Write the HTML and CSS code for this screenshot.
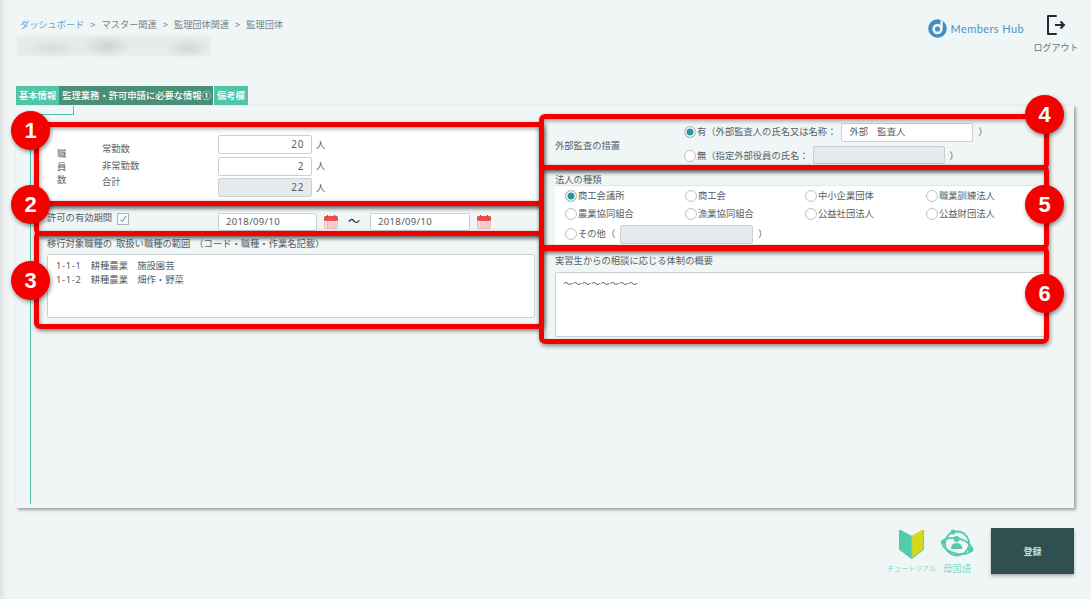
FILE: index.html
```html
<!DOCTYPE html>
<html lang="ja">
<head>
<meta charset="utf-8">
<title>監理団体</title>
<link rel="stylesheet" href="styles.css">
</head>
<body>
<svg class="defs" width="0" height="0" aria-hidden="true">
  <symbol id="cal" viewBox="0 0 16 16">
    <rect x="1" y="2" width="14" height="13" rx="2" fill="#f4b8b4"/>
    <rect x="1" y="2" width="14" height="5" rx="1.5" fill="#e8504c"/>
    <rect x="2" y="7" width="12" height="7" fill="#fbeeee"/>
    <path d="M2 9h12M2 11h12M2 13h12M4.500 7v7M7 7v7M9.500 7v7M12 7v7" stroke="#e3a5a2" stroke-width=".6"/>
    <path d="M4.500 1v3M11.500 1v3" stroke="#d8403c" stroke-width="1.2"/>
  </symbol>
</svg>
<header class="top">
  <div class="crumb-area">
    <nav class="crumbs"><span class="crumb-link">ダッシュボード</span><span class="sep">&gt;</span><span>マスター関連</span><span class="sep">&gt;</span><span>監理団体関連</span><span class="sep">&gt;</span><span>監理団体</span></nav>
    <div class="blurred"></div>
  </div>
  <div class="top-right">
    <div class="logo">
      <svg class="logo-mark" viewBox="0 0 20 20"><circle cx="10" cy="10" r="9.800" fill="#3d8fc6"/><circle cx="10" cy="10.500" r="5.500" fill="#f0f5f6"/><circle cx="10" cy="10.500" r="2.700" fill="#3d8fc6"/><path d="M13 1.500h2.500v8H13z" fill="#f0f5f6"/></svg>
      <span>Members Hub</span>
    </div>
    <div class="logout">
      <svg class="logout-icon" viewBox="0 0 21 22"><path d="M10 2H2v18h8" fill="none" stroke="#222c30" stroke-width="2" stroke-linecap="round" stroke-linejoin="round"/><path d="M9 11h9M14.500 7.500 18 11l-3.500 3.500" fill="none" stroke="#222c30" stroke-width="2"/></svg>
      <span>ログアウト</span>
    </div>
  </div>
</header>

<div class="tabs">
  <span class="tab">基本情報</span><span class="tab active">監理業務・許可申請に必要な情報①</span><span class="tab">備考欄</span>
</div>

<main class="panel">
  <div class="tree-line"></div>
  <div class="col left">
    <section class="staff">
      <div class="staff-title"><span>職</span><span>員</span><span>数</span></div>
      <div class="staff-labels"><span>常勤数</span><span>非常勤数</span><span>合計</span></div>
      <div class="staff-inputs">
        <div class="num-row"><div class="field num">20</div><span>人</span></div>
        <div class="num-row"><div class="field num">2</div><span>人</span></div>
        <div class="num-row"><div class="field num off">22</div><span>人</span></div>
      </div>
    </section>
    <section class="period">
      <span class="period-label">許可の有効期間</span>
      <span class="check"><svg viewBox="0 0 12 12"><path d="M2.500 6.500 5 9l4.500-6.500" fill="none" stroke="#2a8fb5" stroke-width="1.200"/></svg></span>
      <div class="field date">2018/09/10</div>
      <svg class="cal"><use href="#cal"/></svg>
      <span class="tilde">～</span>
      <div class="field date wide">2018/09/10</div>
      <svg class="cal"><use href="#cal"/></svg>
    </section>
    <section class="scope">
      <div class="sec-label spaced">移行対象職種の 取扱い職種の範囲 （コード・職種・作業名記載）</div>
      <div class="field area scope-area">
        <div><span class="code">1-1-1</span>　耕種農業　施設園芸</div>
        <div><span class="code">1-1-2</span>　耕種農業　畑作・野菜</div>
      </div>
    </section>
  </div>

  <div class="col right">
    <section class="audit">
      <div class="audit-label">外部監査の措置</div>
      <div class="audit-options">
        <div class="audit-row"><span class="radio on"></span><span>有（外部監査人の氏名又は名称：</span><div class="field name">外部　監査人</div><span class="paren">）</span></div>
        <div class="audit-row second"><span class="radio"></span><span>無（指定外部役員の氏名：</span><div class="field name off"></div><span class="paren">）</span></div>
      </div>
    </section>
    <section class="corp">
      <div class="sec-label">法人の種類</div>
      <div class="corp-box">
        <label class="opt"><span class="radio on"></span>商工会議所</label>
        <label class="opt"><span class="radio"></span>商工会</label>
        <label class="opt"><span class="radio"></span>中小企業団体</label>
        <label class="opt"><span class="radio"></span>職業訓練法人</label>
        <label class="opt"><span class="radio"></span>農業協同組合</label>
        <label class="opt"><span class="radio"></span>漁業協同組合</label>
        <label class="opt"><span class="radio"></span>公益社団法人</label>
        <label class="opt"><span class="radio"></span>公益財団法人</label>
        <label class="opt other"><span class="radio"></span>その他（<div class="field other-input off"></div><span class="paren">）</span></label>
      </div>
    </section>
    <section class="consult">
      <div class="sec-label">実習生からの相談に応じる体制の概要</div>
      <div class="field area consult-area">～～～～～～～～</div>
    </section>
  </div>
</main>

<footer class="bottom">
  <div class="help tutorial">
    <svg class="leaf" viewBox="0 0 28 33"><path d="M1 3q0-2 2-1l11 6v24L2 23q-1-1-1-2z" fill="#54c9ae"/><path d="M14 8l11-6q2-1 2 1v18q0 1-1 2L14 32z" fill="#d3d81e"/><path d="M14 8v24" stroke="#54c9ae" stroke-width="1.500" stroke-dasharray="1.500 1"/><path d="M26.500 3v19L14 32" fill="none" stroke="#54c9ae" stroke-width="1.200" stroke-dasharray="1.500 1"/></svg>
    <span>チュートリアル</span>
  </div>
  <div class="help native">
    <svg class="globe" viewBox="0 0 33 30"><g fill="none" stroke="#54c9ae" stroke-width="1.800"><circle cx="16" cy="14.500" r="12"/><ellipse cx="16" cy="17" rx="15" ry="7.500" transform="rotate(14 16 17)"/></g><g fill="#54c9ae"><circle cx="15.500" cy="10" r="3"/><path d="M10 20q0-6 5.500-6t6 6z"/><circle cx="12" cy="3" r="2.500"/><circle cx="2.500" cy="13" r="2.500"/><circle cx="29.500" cy="20.500" r="2.800"/></g></svg>
    <span>母国語</span>
  </div>
  <button class="submit">登録</button>
</footer>

<div class="mark box b1"></div>
<div class="mark box b2"></div>
<div class="mark box b3"></div>
<div class="mark box b4"></div>
<div class="mark box b5"></div>
<div class="mark box b6"></div>
<div class="mark num-badge n1">1</div>
<div class="mark num-badge n2">2</div>
<div class="mark num-badge n3">3</div>
<div class="mark num-badge n4">4</div>
<div class="mark num-badge n5">5</div>
<div class="mark num-badge n6">6</div>
</body>
</html>
```
FILE: styles.css
```css
* { box-sizing: border-box; }
html, body { margin: 0; padding: 0; }
body {
  position: relative;
  width: 1091px;
  height: 599px;
  overflow: hidden;
  background: #f0f5f6;
  color: #566064;
  font: 9.300px/1.2 "Noto Sans", "Noto Sans CJK JP", sans-serif;
  box-shadow: inset 7px 0 6px -5px rgba(0,0,0,.1);
}
.defs { position: absolute; }

.top { display: flex; justify-content: space-between; height: 86px; padding: 0 12px 0 17px; }
.crumb-area { padding-top: 19px; }
.crumbs { display: flex; padding-left: 3px; font-size: 9.200px; line-height: 12px; color: #788388; }
.crumb-link { color: #62a3d8; }
.sep { margin: 0 6px; }
.blurred {
  width: 193px;
  height: 20px;
  margin-top: 5px;
  background:
    radial-gradient(ellipse 24px 11px at 90px 10px, #cfd3d4, transparent),
    radial-gradient(ellipse 22px 10px at 170px 12px, #d2d6d7, transparent),
    radial-gradient(ellipse 26px 9px at 35px 12px, #d8dcdd, transparent),
    #e6ebec;
  filter: blur(1px);
}

.top-right { display: flex; align-items: flex-start; }
.logo { display: flex; align-items: center; gap: 4px; margin-top: 19px; color: #4a93c9; font: 11px/19px "Lato", sans-serif; letter-spacing: .4px; }
.logo-mark { width: 19px; height: 19px; }
.logout { display: flex; flex-direction: column; align-items: center; width: 46px; margin: 14px 0 0 9px; color: #6a7478; }
.logout-icon { width: 21px; height: 22px; }
.logout span { margin-top: 6px; font-size: 9px; line-height: 11px; white-space: nowrap; }

.tabs { display: flex; height: 19px; margin-left: 16px; }
.tab { display: flex; align-items: center; padding: 0 3px; background: #52c4aa; color: #fff; font-size: 9.300px; font-weight: 500; white-space: nowrap; }
.tab.active { background: #4a9078; padding-right: 2px; margin-right: 1px; }

.panel {
  position: relative;
  display: grid;
  grid-template-columns: 524px 534px;
  width: 1058px;
  height: 403px;
  margin-left: 16px;
  border-top: 1px solid #e3eaeb;
  box-shadow: 2px 2px 3px #9a9fa0;
}
.tree-line { position: absolute; left: 14px; top: 8px; width: 43px; height: 390px; border: solid #4fc4a8; border-width: 1px 0 0 1px; }
.tree-line::after { content: ""; position: absolute; right: -1px; top: -9px; height: 9px; border-right: 1px solid #4fc4a8; }

.col { position: relative; min-width: 0; }
.left { padding-top: 22px; }
.field { border: 1px solid #c9d0d3; border-radius: 2px; background: #fff; color: #566064; }
.off { background: #e6eaec; }
.sec-label { line-height: 12px; }
.spaced { word-spacing: 1.500px; }

.staff { display: flex; height: 77px; margin: 0 5px 0 23px; padding: 7px 0 0 18px; background: #fff; }
.staff-title { display: flex; flex-direction: column; padding-top: 12px; width: 45px; line-height: 13px; }
.staff-labels { display: flex; flex-direction: column; width: 116px; padding-top: 8px; gap: 4.500px; line-height: 12px; }
.staff-inputs { display: flex; flex-direction: column; gap: 2.500px; }
.num-row { display: flex; align-items: center; gap: 4px; }
.num { width: 94px; height: 19px; padding-right: 7px; text-align: right; font-size: 10px; line-height: 17px; letter-spacing: .6px; }

.period { display: flex; align-items: center; height: 30px; margin-left: 31px; padding-top: 4px; }
.period-label { width: 70px; margin-top: -8px; white-space: nowrap; }
.check { display: flex; width: 12px; height: 12px; margin-top: -7px; border: 1px solid #aab4b8; background: #f8fbfb; }
.date { width: 99px; height: 18px; margin-left: 89px; padding-left: 7px; font-size: 9.600px; line-height: 16px; letter-spacing: .3px; }
.date.wide { width: 100px; margin-left: 0; }
.cal { width: 16px; height: 16px; flex: none; margin-left: 6px; }
.tilde { width: 12px; margin: 0 10px 0 9px; color: #222; font-size: 12px; }

.scope { padding-left: 31px; margin-top: 3px; }
.area { margin-top: 4px; }
.scope-area { width: 488px; height: 64px; padding: 4px 8px; line-height: 14px; }
.code { letter-spacing: .7px; }

.right { padding-left: 15px; }
.audit { display: flex; height: 62px; }
.audit-label { width: 129px; padding-top: 34px; }
.audit-options { padding-top: 16px; }
.audit-row { display: flex; align-items: center; height: 20px; margin-bottom: 4px; white-space: nowrap; }
.name { width: 132px; height: 19px; margin-left: 5px; padding-left: 7px; line-height: 16px; }
.second .name { height: 18px; margin-left: 4px; align-self: flex-start; }
.name + .paren { margin-left: 5px; }
.radio { display: inline-block; flex: none; width: 12px; height: 12px; margin-right: 1px; border: 1px solid #bcc4c6; border-radius: 50%; background: #fff; }
.radio.on { background: #2f94a0; box-shadow: inset 0 0 0 1.500px #fff; }

.corp { margin-top: 4px; height: 79px; padding-top: 2px; }
.corp-box { display: grid; grid-template-columns: 120px 120px 121px 100px; align-content: start; width: 490px; height: 62px; margin-top: -1px; padding: 1px 0 0 10px; background: #fff; border-top: 1px solid #e0e6e8; }
.opt { display: flex; align-items: center; height: 18px; white-space: nowrap; }
.other { grid-column: 1 / -1; height: 22px; }
.other-input { width: 133px; height: 19px; margin-left: 5px; }
.other .paren { margin-left: 5px; }

.consult { padding-top: 4px; }
.consult-area { width: 490px; height: 65px; padding: 5px 7px; margin-top: 5px; }

.bottom { display: flex; align-items: flex-start; justify-content: flex-end; margin-top: 20px; padding-right: 17px; }
.help { display: flex; flex-direction: column; align-items: center; color: #7fdccc; line-height: 10px; white-space: nowrap; }
.help span { margin-top: 4px; }
.tutorial { width: 49px; margin-right: 7px; font-size: 7px; }
.native { width: 28px; margin-right: 20px; font-size: 9.300px; }
.leaf { flex: none; width: 27px; height: 32px; }
.globe { flex: none; width: 33px; height: 30px; margin: 1px -3px 1px; }
.submit { width: 83px; height: 46px; border: 0; background: #2f4f50; color: #e8eeee; font: 500 9px "Noto Sans", "Noto Sans CJK JP", sans-serif; box-shadow: 0 2px 3px rgba(0,0,0,.3); }

.box { position: absolute; border: 5px solid #f50000; border-radius: 6px; box-shadow: 1px 2px 4px rgba(0,0,0,.45), inset 1px 2px 4px rgba(0,0,0,.35); }
.b1 { left: 34px; top: 122px; width: 510px; height: 84px; }
.b2 { left: 34px; top: 201px; width: 510px; height: 35px; }
.b3 { left: 34px; top: 231px; width: 510px; height: 98px; }
.b4 { left: 539px; top: 114px; width: 510px; height: 56px; }
.b5 { left: 539px; top: 165px; width: 510px; height: 85px; }
.b6 { left: 539px; top: 246px; width: 510px; height: 98px; }
.num-badge { position: absolute; width: 39px; height: 39px; border-radius: 50%; background: #f50000; color: #fff; font: 700 22px/39px "Liberation Sans", sans-serif; text-align: center; box-shadow: 1px 2px 4px rgba(0,0,0,.45); }
.n1 { left: 11px; top: 111px; }
.n2 { left: 11px; top: 185px; }
.n3 { left: 11px; top: 261px; }
.n4 { left: 1025px; top: 95px; }
.n5 { left: 1025px; top: 185px; }
.n6 { left: 1025px; top: 274px; }
```
